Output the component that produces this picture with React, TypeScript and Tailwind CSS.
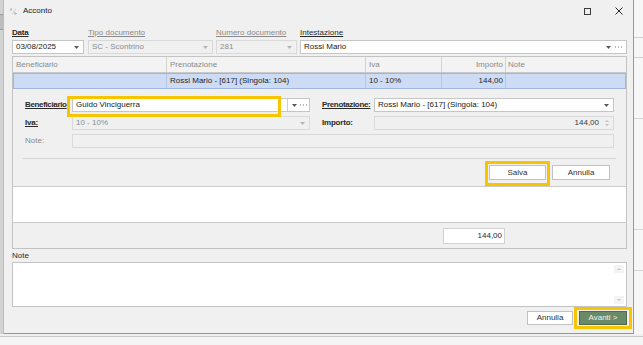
import type { ReactNode } from "react";

const YELLOW = "border-[#f6c500]";

function Caret({ dim = false }: { dim?: boolean }) {
  return (
    <svg width="5" height="3" viewBox="0 0 5 3" className="shrink-0">
      <path d="M0 0h5L2.5 3z" fill={dim ? "#b4b4b4" : "#5a5a5a"} />
    </svg>
  );
}

function Dots() {
  return (
    <svg width="7" height="2" viewBox="0 0 7 2" className="shrink-0">
      <rect x="0" y="0.5" width="1" height="1" fill="#777" />
      <rect x="3" y="0.5" width="1" height="1" fill="#777" />
      <rect x="6" y="0.5" width="1" height="1" fill="#777" />
    </svg>
  );
}

function Field({
  children,
  disabled = false,
  className = "",
  right,
}: {
  children?: ReactNode;
  disabled?: boolean;
  className?: string;
  right?: ReactNode;
}) {
  return (
    <div
      className={`flex h-[14px] items-center border pl-[3px] pr-[4px] ${
        disabled
          ? "border-[#d9d9d9] bg-[#f0f0f0] text-[#8c8c8c]"
          : "border-[#c6c6c6] bg-white text-[#202020]"
      } ${className}`}
    >
      <div className="min-w-0 flex-1 truncate">{children}</div>
      {right}
    </div>
  );
}

function Btn({ children, className = "" }: { children: ReactNode; className?: string }) {
  return (
    <div
      className={`flex h-[15px] items-center justify-center border border-[#c2c2c2] bg-white text-[#303030] ${className}`}
    >
      {children}
    </div>
  );
}

export default function App() {
  return (
    <div className="flex h-[345px] w-[643px] flex-col overflow-hidden bg-[#efefef] font-['Liberation_Sans',Arial,sans-serif] text-[8px] leading-[10px] text-[#222]">
      <div className="flex h-[334px]">
        {/* app behind, left edge */}
        <div className="flex w-[3px] flex-col bg-[#d2d2d2]">
          <div className="h-[14px]" />
          <div className="h-[1px] bg-[#9c9c9c]" />
          <div className="h-[14px] bg-[#bdbdbd]" />
          <div className="h-[1px] bg-[#9c9c9c]" />
        </div>

        {/* dialog */}
        <div className="flex w-[631px] flex-col border-x border-b border-l-[#b3bccb] border-r-[#8d9cb6] border-b-[#7f98bd] bg-[#f0f0f0]">
          {/* title bar */}
          <div className="flex h-[22px] items-center pl-[6px] pr-[10px]">
            <svg width="8" height="9" viewBox="0 0 8 9" className="mr-[5px]">
              <path d="M1 1v3M0 2.5h2" stroke="#b9b9b9" strokeWidth="1" />
              <path d="M5 5v3M4 6.5h3" stroke="#b9b9b9" strokeWidth="1" />
              <path d="M2 7l4-5" stroke="#d0d0d0" strokeWidth="1" />
            </svg>
            <span className="text-[#1a1a1a]">Acconto</span>
            <div className="flex-1" />
            <div className="mr-[24px] h-[7px] w-[7px] border border-[#3a3a3a]" />
            <svg width="8" height="8" viewBox="0 0 8 8">
              <path d="M0.5 0.5l7 7M7.5 0.5l-7 7" stroke="#2a2a2a" strokeWidth="1" />
            </svg>
          </div>

          {/* body */}
          <div className="flex flex-1 flex-col pl-[8px] pr-[6px] pt-[6px]">
            {/* header fields */}
            <div className="flex">
              <div className="flex w-[72px] flex-col">
                <span className="h-[10px] font-bold tracking-[-0.2px] text-[#2a2a2a] underline">Data</span>
                <Field className="mt-[2px]" right={<Caret />}>
                  03/08/2025
                </Field>
              </div>
              <div className="ml-[4px] flex w-[125px] flex-col">
                <span className="h-[10px] text-[#8a8a8a] underline">Tipo documento</span>
                <Field className="mt-[2px]" disabled right={<Caret dim />}>
                  SC - Scontrino
                </Field>
              </div>
              <div className="ml-[3px] flex w-[81px] flex-col">
                <span className="h-[10px] text-[#8a8a8a] underline">Numero documento</span>
                <Field className="mt-[2px]" disabled right={<Caret dim />}>
                  281
                </Field>
              </div>
              <div className="ml-[3px] flex flex-1 flex-col">
                <span className="h-[10px] text-[#2a2a2a] underline">Intestazione</span>
                <Field
                  className="mt-[2px]"
                  right={
                    <div className="flex items-center gap-[4px]">
                      <Caret />
                      <Dots />
                    </div>
                  }
                >
                  Rossi Mario
                </Field>
              </div>
            </div>

            {/* main panel */}
            <div className="mt-[2px] flex flex-col border border-[#c3c3c3]">
              {/* grid header */}
              <div className="flex h-[16px] items-center border-b border-[#c9c9c9] bg-[#f3f3f3] text-[#8a8a8a]">
                <div className="flex h-full w-[154px] items-center border-r border-[#d2d2d2] pl-[3px]">Beneficiario</div>
                <div className="flex h-full w-[199px] items-center border-r border-[#d2d2d2] pl-[3px]">Prenotazione</div>
                <div className="flex h-full w-[76px] items-center border-r border-[#d2d2d2] pl-[3px]">Iva</div>
                <div className="flex h-full w-[64px] items-center justify-end border-r border-[#d2d2d2] pr-[2px]">Importo</div>
                <div className="flex h-full flex-1 items-center pl-[2px]">Note</div>
              </div>
              {/* selected row */}
              <div className="flex h-[16px] items-center border border-[#9eb6dc] bg-[#cddcf4] text-[#1e1e1e]">
                <div className="h-full w-[153px] border-r border-[#b4c6e4]" />
                <div className="flex h-full w-[199px] items-center border-r border-[#b4c6e4] pl-[3px]">Rossi Mario - [617] (Singola: 104)</div>
                <div className="flex h-full w-[76px] items-center border-r border-[#b4c6e4] pl-[3px]">10 - 10%</div>
                <div className="flex h-full w-[64px] items-center justify-end border-r border-[#b4c6e4] pr-[2px]">144,00</div>
                <div className="flex-1" />
              </div>

              {/* edit panel */}
              <div className="flex flex-col pl-[12px] pr-[12px] pt-[9px]">
                <div className="flex items-center">
                  <span className="w-[47px] font-bold tracking-[-0.35px] text-[#2a2a2a] underline">Beneficiario</span>
                  <div className="relative w-[238px]">
                    <Field
                      right={
                        <div className="-mr-[4px] flex h-full items-center gap-[3px] border-l border-[#d0d0d0] pl-[4px] pr-[2px]">
                          <Caret />
                          <Dots />
                        </div>
                      }
                    >
                      Guido Vinciguerra
                    </Field>
                    <div className={`pointer-events-none absolute -left-[5px] -top-[2px] h-[21px] w-[214px] border-[3px] ${YELLOW}`} />
                  </div>
                  <span className="ml-[12px] w-[52px] font-bold tracking-[-0.35px] text-[#2a2a2a] underline">Prenotazione:</span>
                  <Field className="flex-1" right={<Caret />}>
                    Rossi Mario - [617] (Singola: 104)
                  </Field>
                </div>

                <div className="mt-[4px] flex items-center">
                  <span className="w-[47px] font-bold tracking-[-0.2px] text-[#2a2a2a] underline">Iva:</span>
                  <Field className="w-[238px]" disabled right={<Caret dim />}>
                    10 - 10%
                  </Field>
                  <span className="ml-[12px] w-[52px] font-bold tracking-[-0.2px] text-[#2a2a2a]">Importo:</span>
                  <Field
                    className="flex-1"
                    disabled
                    right={
                      <div className="ml-[6px] flex flex-col gap-[2px]">
                        <svg width="4" height="2" viewBox="0 0 4 2"><path d="M0 2h4L2 0z" fill="#c0c0c0" /></svg>
                        <svg width="4" height="2" viewBox="0 0 4 2"><path d="M0 0h4L2 2z" fill="#c0c0c0" /></svg>
                      </div>
                    }
                  >
                    <div className="text-right text-[#3a3a3a]">144,00</div>
                  </Field>
                </div>

                <div className="mt-[4px] flex items-center">
                  <span className="w-[47px] text-[#8a8a8a]">Note:</span>
                  <Field className="flex-1" disabled />
                </div>

                <div className="ml-[-2px] mr-[-2px] mt-[10px] h-[1px] bg-[#d4d4d4]" />

                <div className="mt-[6px] flex justify-end pb-[6px] pr-[4px]">
                  <div className="relative">
                    <Btn className="w-[57px]">Salva</Btn>
                    <div className={`pointer-events-none absolute -bottom-[6px] -left-[4px] -right-[4px] -top-[4px] border-[3px] ${YELLOW}`} />
                  </div>
                  <Btn className="ml-[6px] w-[58px]">Annulla</Btn>
                </div>
              </div>

              {/* list area */}
              <div className="h-[37px] border-y border-[#cbcbcb] bg-white" />

              {/* total strip */}
              <div className="flex h-[25px] items-center pl-[430px]">
                <div className="flex h-[16px] w-[62px] items-center justify-end border border-[#d2d2d2] bg-white pr-[2px] text-[#2a2a2a]">
                  144,00
                </div>
              </div>
            </div>

            {/* note */}
            <span className="mt-[2px] h-[10px] text-[#2a2a2a]">Note</span>
            <div className="mt-[1px] flex h-[45px] border border-[#c3c3c3] bg-white">
              <div className="flex-1" />
              <div className="flex w-[12px] flex-col justify-between py-[2px] pr-[2px]">
                <div className="flex h-[8px] items-center justify-center bg-[#f4f4f4]">
                  <svg width="4" height="2" viewBox="0 0 4 2"><path d="M0 2h4L2 0z" fill="#c4c4c4" /></svg>
                </div>
                <div className="flex h-[8px] items-center justify-center bg-[#f4f4f4]">
                  <svg width="4" height="2" viewBox="0 0 4 2"><path d="M0 0h4L2 2z" fill="#c4c4c4" /></svg>
                </div>
              </div>
            </div>

            <div className="mt-[4px] flex justify-end">
              <div className="flex h-[14px] w-[46px] items-center justify-center border border-[#c2c2c2] bg-white text-[#303030]">
                Annulla
              </div>
              <div className="relative ml-[6px]">
                <div className="flex h-[14px] w-[48px] items-center justify-center border border-[#4f6b4f] bg-[#6a8a67] text-[#eef3ee]">
                  Avanti &gt;
                </div>
                <div className={`pointer-events-none absolute -bottom-[4px] -left-[5px] -right-[5px] -top-[4px] border-[3px] ${YELLOW}`} />
              </div>
            </div>
          </div>
        </div>

        {/* app behind, right edge */}
        <div className="flex flex-1 flex-col bg-[#f7f7f7]">
          <div className="h-[37px]" />
          <div className="h-[1px] bg-[#cfcfcf]" />
          <div className="h-[19px]" />
          <div className="h-[1px] bg-[#cfcfcf]" />
          <div className="h-[60px]" />
          <div className="h-[1px] bg-[#d6d6d6]" />
          <div className="h-[110px]" />
          <div className="h-[1px] bg-[#d6d6d6]" />
          <div className="h-[40px]" />
          <div className="h-[1px] bg-[#d6d6d6]" />
        </div>
      </div>

      {/* app behind, bottom */}
      <div className="flex flex-1 flex-col">
        <div className="h-[2px]" />
        <div className="h-[1px] bg-[#c9c9c9]" />
        <div className="flex-1 bg-[#f4f4f4]" />
      </div>
    </div>
  );
}
